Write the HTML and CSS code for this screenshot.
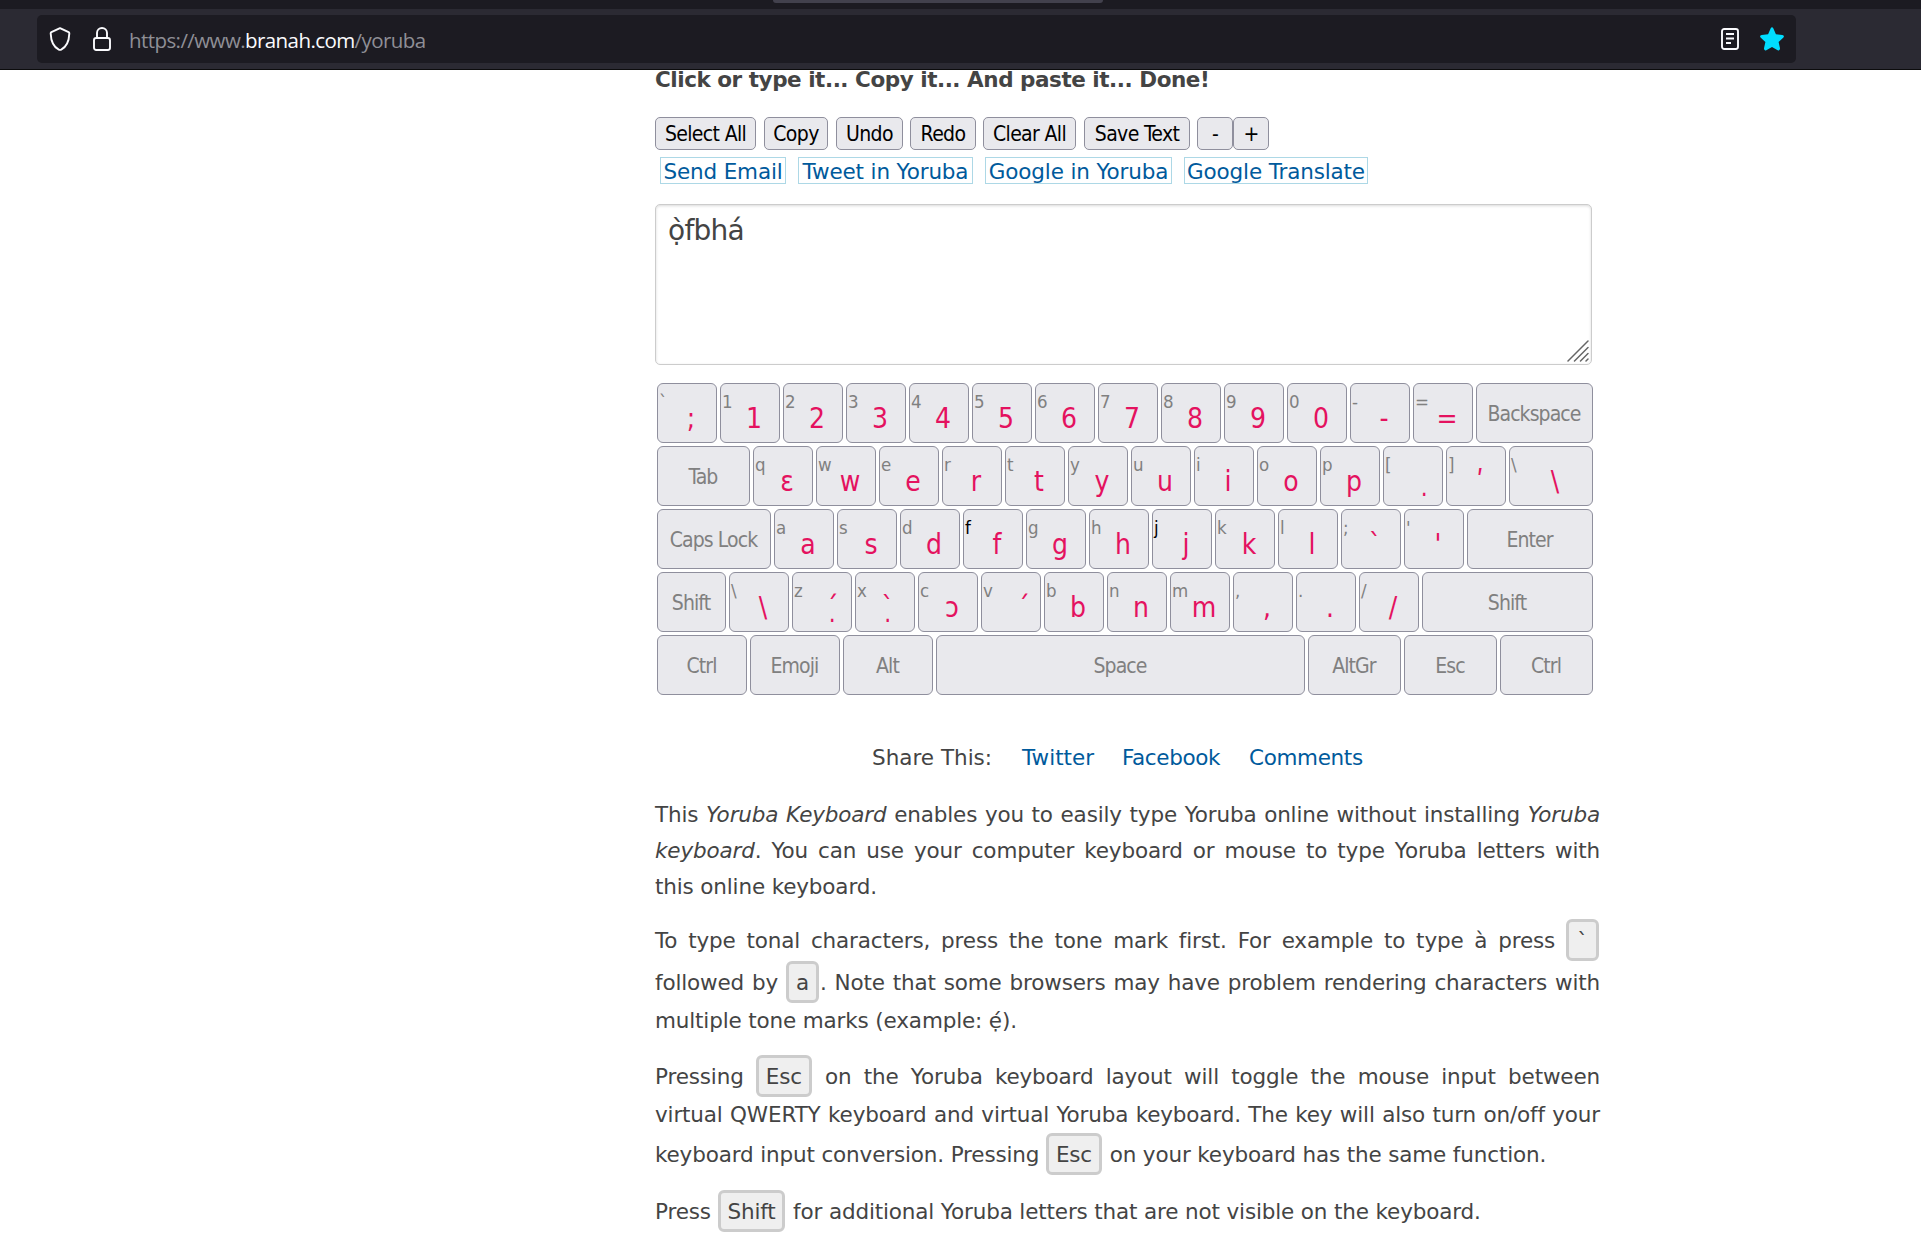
FILE: index.html
```html
<!DOCTYPE html>
<html lang="en">
<head>
<meta charset="utf-8">
<title>Yoruba Keyboard</title>
<link rel="stylesheet" href="styles.css">
</head>
<body>
<header class="chrome">
  <div class="tabs"><div class="tab"></div></div>
  <div class="toolbar">
    <div class="urlbar">
      <svg class="shield" width="22" height="24" viewBox="0 0 22 24" fill="none" stroke="#fbfbfe" stroke-width="1.9" stroke-linejoin="round"><path d="M11 1.2 19.6 5.2Q20.4 5.6 20.3 6.6C20 14.500 17.200 20 12.200 22.600Q11 23.200 9.800 22.600C4.800 20 2 14.500 1.700 6.600Q1.600 5.600 2.400 5.200Z"/></svg>
      <svg class="lock" width="18" height="24" viewBox="0 0 18 24" fill="none" stroke="#fbfbfe" stroke-width="1.9"><path d="M4 11V6a5 5 0 0 1 10 0v5"/><rect x="1" y="11" width="16" height="12" rx="2.200"/></svg>
      <div class="url">https://www.<span class="domain">branah.com</span>/yoruba</div>
      <svg class="reader" width="18" height="22" viewBox="0 0 18 22" fill="none" stroke="#fbfbfe" stroke-width="1.900"><rect x="1" y="1" width="16" height="20" rx="2.200"/><path d="M5 6h8M5 10.500h8M5 15h5"/></svg>
      <svg class="star" width="24" height="24" viewBox="0 0 24 24" fill="#00ddff"><path d="M10.600 1.400Q12-.9 13.400 1.400L15.900 7.200 22.300 7.900Q25 8.500 23.200 10.700L18.600 14.900 20 21.200Q20.200 24 17.700 23.200L12 20 6.300 23.200Q3.800 24 4 21.200L5.400 14.900.8 10.700Q-1 8.500 1.700 7.900L8.100 7.200Z"/></svg>
    </div>
  </div>
</header>
<main class="page">
  <h1 class="title">Click or type it... Copy it... And paste it... Done!</h1>
  <div class="actions">
    <button class="btn w101">Select All</button>
    <button class="btn w64">Copy</button>
    <button class="btn w67">Undo</button>
    <button class="btn w66">Redo</button>
    <button class="btn w93">Clear All</button>
    <button class="btn w106">Save Text</button>
    <div class="zoom"><button class="btn w36">-</button><button class="btn w36">+</button></div>
  </div>
  <nav class="links">
    <a class="l1">Send Email</a><a class="l2">Tweet in Yoruba</a><a class="l3">Google in Yoruba</a><a class="l4">Google Translate</a>
  </nav>
  <div class="editor">ọ̀fbhá
    <svg class="grip" width="22" height="22" viewBox="0 0 22 22" stroke="#666" stroke-width="1.500" stroke-linecap="round"><path d="M1 21 21 1M7.500 21 21 7.500M13.500 21 21 13.500M19 21 21 19"/></svg>
  </div>
  <section class="keyboard">
    <div class="row">
      <div class="key"><small>`</small><b>;</b></div><div class="key"><small>1</small><b>1</b></div><div class="key"><small>2</small><b>2</b></div><div class="key"><small>3</small><b>3</b></div><div class="key"><small>4</small><b>4</b></div><div class="key"><small>5</small><b>5</b></div><div class="key"><small>6</small><b>6</b></div><div class="key"><small>7</small><b>7</b></div><div class="key"><small>8</small><b>8</b></div><div class="key"><small>9</small><b>9</b></div><div class="key"><small>0</small><b>0</b></div><div class="key"><small>-</small><b>-</b></div><div class="key"><small>=</small><b>=</b></div><div class="key fn grow">Backspace</div>
    </div>
    <div class="row">
      <div class="key fn w93">Tab</div><div class="key"><small>q</small><b>ɛ</b></div><div class="key"><small>w</small><b>w</b></div><div class="key"><small>e</small><b>e</b></div><div class="key"><small>r</small><b>r</b></div><div class="key"><small>t</small><b>t</b></div><div class="key"><small>y</small><b>y</b></div><div class="key"><small>u</small><b>u</b></div><div class="key"><small>i</small><b>i</b></div><div class="key"><small>o</small><b>o</b></div><div class="key"><small>p</small><b>p</b></div><div class="key dot"><small>[</small><b>&nbsp;&#x323;</b></div><div class="key"><small>]</small><b>ʹ</b></div><div class="key grow"><small>\</small><b>\</b></div>
    </div>
    <div class="row">
      <div class="key fn w114">Caps Lock</div><div class="key"><small>a</small><b>a</b></div><div class="key"><small>s</small><b>s</b></div><div class="key"><small>d</small><b>d</b></div><div class="key home"><small>f</small><b>f</b></div><div class="key"><small>g</small><b>g</b></div><div class="key"><small>h</small><b>h</b></div><div class="key home"><small>j</small><b>j</b></div><div class="key"><small>k</small><b>k</b></div><div class="key"><small>l</small><b>l</b></div><div class="key"><small>;</small><b>`</b></div><div class="key"><small>'</small><b>'</b></div><div class="key fn grow">Enter</div>
    </div>
    <div class="row">
      <div class="key fn w69">Shift</div><div class="key"><small>\</small><b>\</b></div><div class="key shifted"><small>z</small><b>&nbsp;&#x323;&#x301;</b></div><div class="key tone"><small>x</small><b>&nbsp;&#x323;&#x300;</b></div><div class="key"><small>c</small><b>ɔ</b></div><div class="key shifted"><small>v</small><b>´</b></div><div class="key"><small>b</small><b>b</b></div><div class="key"><small>n</small><b>n</b></div><div class="key"><small>m</small><b>m</b></div><div class="key"><small>,</small><b>,</b></div><div class="key"><small>.</small><b>.</b></div><div class="key"><small>/</small><b>/</b></div><div class="key fn grow">Shift</div>
    </div>
    <div class="row">
      <div class="key fn w90">Ctrl</div><div class="key fn w90">Emoji</div><div class="key fn w90">Alt</div><div class="key fn grow">Space</div><div class="key fn w93">AltGr</div><div class="key fn w93">Esc</div><div class="key fn w93">Ctrl</div>
    </div>
  </section>
  <div class="share"><span>Share This:</span><a>Twitter</a><a>Facebook</a><a>Comments</a></div>
  <article class="copy">
    <p>This <em>Yoruba Keyboard</em> enables you to easily type Yoruba online without installing <em>Yoruba keyboard</em>. You can use your computer keyboard or mouse to type Yoruba letters with this online keyboard.</p>
    <p>To type tonal characters, press the tone mark first. For example to type à press <kbd>`</kbd> followed by <kbd>a</kbd>. Note that some browsers may have problem rendering characters with multiple tone marks (example: ẹ́).</p>
    <p>Pressing <kbd>Esc</kbd> on the Yoruba keyboard layout will toggle the mouse input between virtual QWERTY keyboard and virtual Yoruba keyboard. The key will also turn on/off your keyboard input conversion. Pressing <kbd>Esc</kbd> on your keyboard has the same function.</p>
    <p>Press <kbd>Shift</kbd> for additional Yoruba letters that are not visible on the keyboard.</p>
  </article>
</main>
</body>
</html>
```
FILE: styles.css
```css
* { box-sizing: border-box; }
body {
  margin: 0;
  height: 1252px;
  overflow: hidden;
  background: #fff;
  color: #444;
  font: 21.5px/26px "DejaVu Sans", Verdana, sans-serif;
  letter-spacing: -.15px;
}
/* browser chrome */
.chrome { position: relative; z-index: 1; height: 70px; background: #2b2a33; border-bottom: 1px solid #0c0c0d; }
.tabs { height: 9px; background: #1c1b22; }
.tab { width: 330px; height: 3px; margin-left: 773px; background: #42414d; border-radius: 0 0 5px 5px; }
.toolbar { padding: 6px 125px 6px 37px; }
.urlbar { display: flex; align-items: center; height: 48px; padding: 0 12px; background: #1c1b22; border-radius: 5px; }
.lock { margin-left: 22px; }
.url { flex: 1; margin-left: 18px; padding-top: 2px; font: 20.5px/28px "Open Sans", sans-serif; letter-spacing: -.58px; color: #8f8f96; white-space: pre; }
.domain { color: #fbfbfe; }
.star { margin-left: 21px; }

.page { width: 945px; margin-left: 655px; }
.title { margin: -3px 0 0; font-size: 21.5px; line-height: 26px; letter-spacing: -.46px; white-space: nowrap; }
.actions { display: flex; gap: 7px; margin-top: 24px; }
.zoom { display: flex; }
.btn {
  height: 33px; padding: 0; border: 1px solid #8f8f9d; border-radius: 5px; background: #e9e9ed;
  color: #000; font: 21px "DejaVu Sans Condensed", Tahoma, sans-serif; letter-spacing: -.65px; white-space: nowrap;
}
.w36 { width: 36px; } .w64 { width: 64px; } .w66 { width: 66px; } .w67 { width: 67px; }
.w69 { width: 69px; } .w90 { width: 90px; } .w93 { width: 93px; } .w101 { width: 101px; }
.w106 { width: 106px; } .w114 { width: 114px; }
.btn.w101, .btn.w64 { margin-right: 1px; }
.btn.w106 { margin-left: 1px; }

.links { display: flex; gap: 12px; margin: 7px 0 0 5px; }
.links a { height: 27px; border: 1px solid #add8e6; color: #005a9c; line-height: 27px; text-align: center; white-space: nowrap; }
.l1 { width: 126px; } .l2 { width: 175px; } .l3 { width: 187px; } .l4 { width: 184px; }

.editor {
  position: relative; width: 937px; height: 161px; margin-top: 20px; padding: 8px 12px;
  border: 1px solid #ccc; border-radius: 5px; box-shadow: inset 0 1px 3px rgba(0,0,0,.15);
  font-size: 28px; line-height: 36px; letter-spacing: -.75px;
}
.grip { position: absolute; right: 2px; bottom: 2px; }

.keyboard { display: flex; flex-direction: column; gap: 3px; width: 936px; margin: 18px 0 0 2px; }
.row { display: flex; gap: 3px; }
.key {
  display: flex; flex: none; width: 60px; height: 60px; border: 1px solid #8f8f9d; border-radius: 6px;
  background: #e9e9ed; font-family: "DejaVu Sans Condensed", Tahoma, sans-serif; letter-spacing: 0; white-space: nowrap;
}
.key small { width: 8px; padding-left: 1px; color: #808080; font-size: 18.5px; line-height: 35px; }
.key b { flex: 1; color: #e4125f; font-size: 28px; font-weight: normal; line-height: 70px; text-align: center; }
.key.fn { align-items: center; justify-content: center; padding: 1px 1px 0 0; color: #808080; font-size: 21px; letter-spacing: -.9px; }
.key.home small { color: #000; }
.key.shifted b { padding-left: 17px; }
.key.tone b { padding-left: 2px; }
.key.dot b { padding-left: 19px; }
.key.w69 { width: 69px; } .key.w90 { width: 90px; } .key.w93 { width: 93px; } .key.w114 { width: 114px; }
.key.grow { flex: 1; }

.share { display: flex; margin: 50px 0 0 217px; white-space: nowrap; }
.share span { width: 150px; letter-spacing: 0; }
.share a { width: 100px; color: #005a9c; letter-spacing: -.35px; }
.share a:first-of-type { letter-spacing: 0; }
.share a + a { width: 127px; }

.copy { padding-top: 26px; line-height: 36px; text-align: justify; }
.copy p { margin: 0 0 15.5px; }
.copy p:first-child { margin-bottom: 13.5px; }
.copy p:nth-child(2) { margin-bottom: 16px; }
kbd {
  display: inline-block; height: 42px; min-width: 33px; margin: 0 1px 0 0; padding: 0 7px; border: 3px solid #ccc; border-radius: 6px;
  background: #efefef; font: inherit; line-height: 38px; letter-spacing: -.2px; text-align: center;
}
```
